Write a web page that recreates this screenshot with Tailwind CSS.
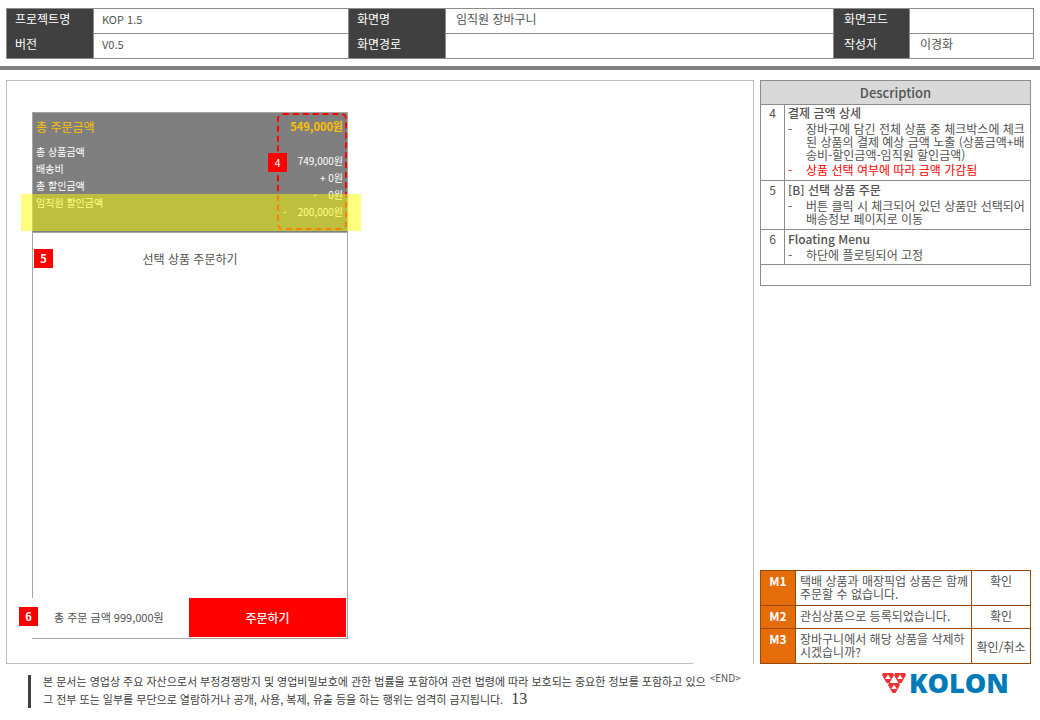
<!DOCTYPE html>
<html lang="ko">
<head>
<meta charset="utf-8">
<title>임직원 장바구니</title>
<script src="https://cdn.jsdelivr.net/npm/@tailwindcss/browser@4"></script>
</head>
<body class="min-h-screen bg-white font-['Noto_Sans_CJK_KR',sans-serif] text-xs text-neutral-600">
<header class="border-b-4 border-[#808080] pt-2 pr-[6px] pb-[7px] pl-[6px]">
  <table class="w-full table-fixed border-collapse border border-[#8c8c8c] text-left leading-4">
    <colgroup><col class="w-[87px]"><col class="w-[255px]"><col class="w-[97px]"><col><col class="w-[76px]"><col class="w-[124px]"></colgroup>
    <tbody>
      <tr class="h-[25px] align-top">
        <th class="bg-[#404040] px-2 pt-[2px] font-normal text-white">프로젝트명</th>
        <td class="border border-[#8c8c8c] px-2 pt-[2px] text-[11px]">KOP 1.5</td>
        <th class="bg-[#404040] px-2 pt-[2px] font-normal text-white">화면명</th>
        <td class="border border-[#8c8c8c] px-[10px] pt-[2px]">임직원 장바구니</td>
        <th class="bg-[#404040] px-[10px] pt-[2px] font-normal text-white">화면코드</th>
        <td class="border border-[#8c8c8c]"></td>
      </tr>
      <tr class="h-[25px] align-top">
        <th class="bg-[#404040] px-2 pt-[2px] font-normal text-white">버전</th>
        <td class="border border-[#8c8c8c] px-2 pt-[2px] text-[11px]">V0.5</td>
        <th class="bg-[#404040] px-2 pt-[2px] font-normal text-white">화면경로</th>
        <td class="border border-[#8c8c8c]"></td>
        <th class="bg-[#404040] px-[10px] pt-[2px] font-normal text-white">작성자</th>
        <td class="border border-[#8c8c8c] px-[10px] pt-[2px]">이경화</td>
      </tr>
    </tbody>
  </table>
</header>

<main class="flex gap-[6px] pt-[10px] pr-[9px] pl-[6px]">
  <section class="flex min-h-[584px] flex-1 flex-col border border-b-0 border-[#bfbfbf] pt-[31px]">
    <div class="relative ml-[25px] flex min-h-[527px] w-[316px] flex-col border border-[#a6a6a6]">
      <div class="h-[119px] bg-[#7f7f7f] pt-[5px] pr-1 pl-[3px] text-[10px] leading-[17px] text-white">
        <div class="flex justify-between text-xs leading-[17px] text-[#ffc000]">
          <span>총 주문금액</span><strong class="text-[11px] leading-[17px] font-bold">549,000원</strong>
        </div>
        <div class="flex justify-between">
          <ul class="pt-2"><li>총 상품금액</li><li>배송비</li><li>총 할인금액</li><li>임직원 할인금액</li></ul>
          <ul class="pt-[17px] text-right whitespace-pre"><li>749,000원</li><li>+ 0원</li><li>-    0원</li><li>-    200,000원</li></ul>
        </div>
      </div>
      <h2 class="border-t border-[#a6a6a6] pt-[18px] text-center leading-4">선택 상품 주문하기</h2>
      <div class="mt-auto mr-px -ml-px flex h-10 items-start bg-white">
        <p class="flex-1 pl-[22px] text-[11px] leading-[38px]">총 주문 금액 999,000원</p>
        <button type="button" class="h-[39px] w-[157px] bg-[#ff0000] text-xs font-medium text-white">주문하기</button>
      </div>
      <div class="absolute top-0 right-0 h-[117px] w-[70px] rounded-md border-2 border-dashed border-[#ff0000]"></div>
      <div class="absolute top-[81px] -right-[14px] -left-[12px] h-[37px] bg-[#ffff00]/50"></div>
      <span class="absolute top-10 right-[60px] grid size-[19px] place-items-center bg-[#ff0000] text-[11px] text-white">4</span>
      <span class="absolute top-[136px] left-[1px] grid size-[19px] place-items-center bg-[#ff0000] text-[11px] font-bold text-white">5</span>
      <span class="absolute bottom-[12px] -left-[14px] grid size-[19px] place-items-center bg-[#ff0000] text-[11px] font-bold text-white">6</span>
    </div>
    <div class="mt-auto mr-[60px] h-px bg-[#bfbfbf]"></div>
  </section>

  <aside class="flex w-[271px] flex-col justify-between">
    <table class="w-full table-fixed border-collapse border border-[#8c8c8c] leading-[13px]">
      <colgroup><col class="w-6"><col></colgroup>
      <thead><tr><th colspan="2" class="h-6 border border-[#8c8c8c] bg-[#d9d9d9] text-[13px] font-medium">Description</th></tr></thead>
      <tbody class="align-top">
        <tr class="h-[76px]">
          <td class="border border-[#8c8c8c] pt-px text-center">4</td>
          <td class="border border-[#8c8c8c] pt-px pl-[3px]"><b class="font-medium">결제 금액 상세</b>
            <ul class="pt-[3px]">
              <li class="flex"><span class="w-[18px] shrink-0">-</span><span>장바구에 담긴 전체 상품 중 체크박스에 체크<br>된 상품의 결제 예상 금액 노출 (상품금액+배<br>송비-할인금액-임직원 할인금액)</span></li>
              <li class="flex pt-[2px] text-[#ff0000]"><span class="w-[18px] shrink-0">-</span><span>상품 선택 여부에 따라 금액 가감됨</span></li>
            </ul></td>
        </tr>
        <tr class="h-[49px]">
          <td class="border border-[#8c8c8c] pt-[2px] text-center">5</td>
          <td class="border border-[#8c8c8c] pt-[2px] pl-[3px]"><b class="font-medium">[B] 선택 상품 주문</b>
            <ul class="pt-[3px]"><li class="flex"><span class="w-[18px] shrink-0">-</span><span>버튼 클릭 시 체크되어 있던 상품만 선택되어<br>배송정보 페이지로 이동</span></li></ul></td>
        </tr>
        <tr class="h-[35px]">
          <td class="border border-[#8c8c8c] pt-[2px] text-center">6</td>
          <td class="border border-[#8c8c8c] pt-[2px] pl-[3px]"><b class="font-medium">Floating Menu</b>
            <ul class="pt-[3px]"><li class="flex"><span class="w-[18px] shrink-0">-</span><span>하단에 플로팅되어 고정</span></li></ul></td>
        </tr>
        <tr class="h-[21px]"><td colspan="2" class="border border-[#8c8c8c]"></td></tr>
      </tbody>
    </table>

    <table class="w-full table-fixed border-collapse border border-[#984807] leading-[13px]">
      <colgroup><col class="w-[35px]"><col><col class="w-[59px]"></colgroup>
      <tbody class="align-top">
        <tr class="h-[35px]"><th class="border border-[#984807] bg-[#e46c0a] pt-[3px] font-bold text-white">M1</th><td class="border border-[#984807] pt-[3px] pl-1">택배 상품과 매장픽업 상품은 함께<br>주문할 수 없습니다.</td><td class="border border-[#984807] pt-[3px] text-center">확인</td></tr>
        <tr class="h-[23px]"><th class="border border-[#984807] bg-[#e46c0a] pt-[3px] font-bold text-white">M2</th><td class="border border-[#984807] pt-[3px] pl-1">관심상품으로 등록되었습니다.</td><td class="border border-[#984807] pt-[3px] text-center">확인</td></tr>
        <tr class="h-[35px]"><th class="border border-[#984807] bg-[#e46c0a] pt-[3px] font-bold text-white">M3</th><td class="border border-[#984807] pt-[3px] pl-1">장바구니에서 해당 상품을 삭제하<br>시겠습니까?</td><td class="border border-[#984807] text-center align-middle">확인/취소</td></tr>
      </tbody>
    </table>
  </aside>
</main>

<footer class="flex items-start pt-[9px] pr-[30px] pl-7">
  <div class="mt-[2px] border-l-[3px] border-[#404040] pl-3 text-[11px] leading-[18px] whitespace-nowrap text-[#404040]">
    <p class="-mt-[3px]">본 문서는 영업상 주요 자산으로서 부정경쟁방지 및 영업비밀보호에 관한 법률을 포함하여 관련 법령에 따라 보호되는 중요한 정보를 포함하고 있으</p>
    <p class="flex">그 전부 또는 일부를 무단으로 열람하거나 공개, 사용, 복제, 유출 등을 하는 행위는 엄격히 금지됩니다.<span class="pl-2 font-['Liberation_Serif',serif] text-base leading-[18px]">13</span></p>
  </div>
  <span class="pl-1 text-[10px] leading-[10px]">&lt;END&gt;</span>
  <svg class="ml-auto h-6 w-[128px] overflow-visible" viewBox="0 0 128 24" role="img" aria-label="KOLON">
    <defs>
      <g id="unit">
        <path fill="#ee3135" d="M1 0H11L12 2L7.500 10H4.500L0 2Z"/>
        <path fill="#fff" d="M6 1.500L8.800 6H3.200Z"/>
      </g>
    </defs>
    <use href="#unit"/><use href="#unit" x="12"/><use href="#unit" x="6" y="10"/>
    <text x="27" y="20" fill="#007bb8" font-family="Open Sans, sans-serif" font-weight="800" font-size="27">KOLON</text>
  </svg>
</footer>
</body>
</html>
